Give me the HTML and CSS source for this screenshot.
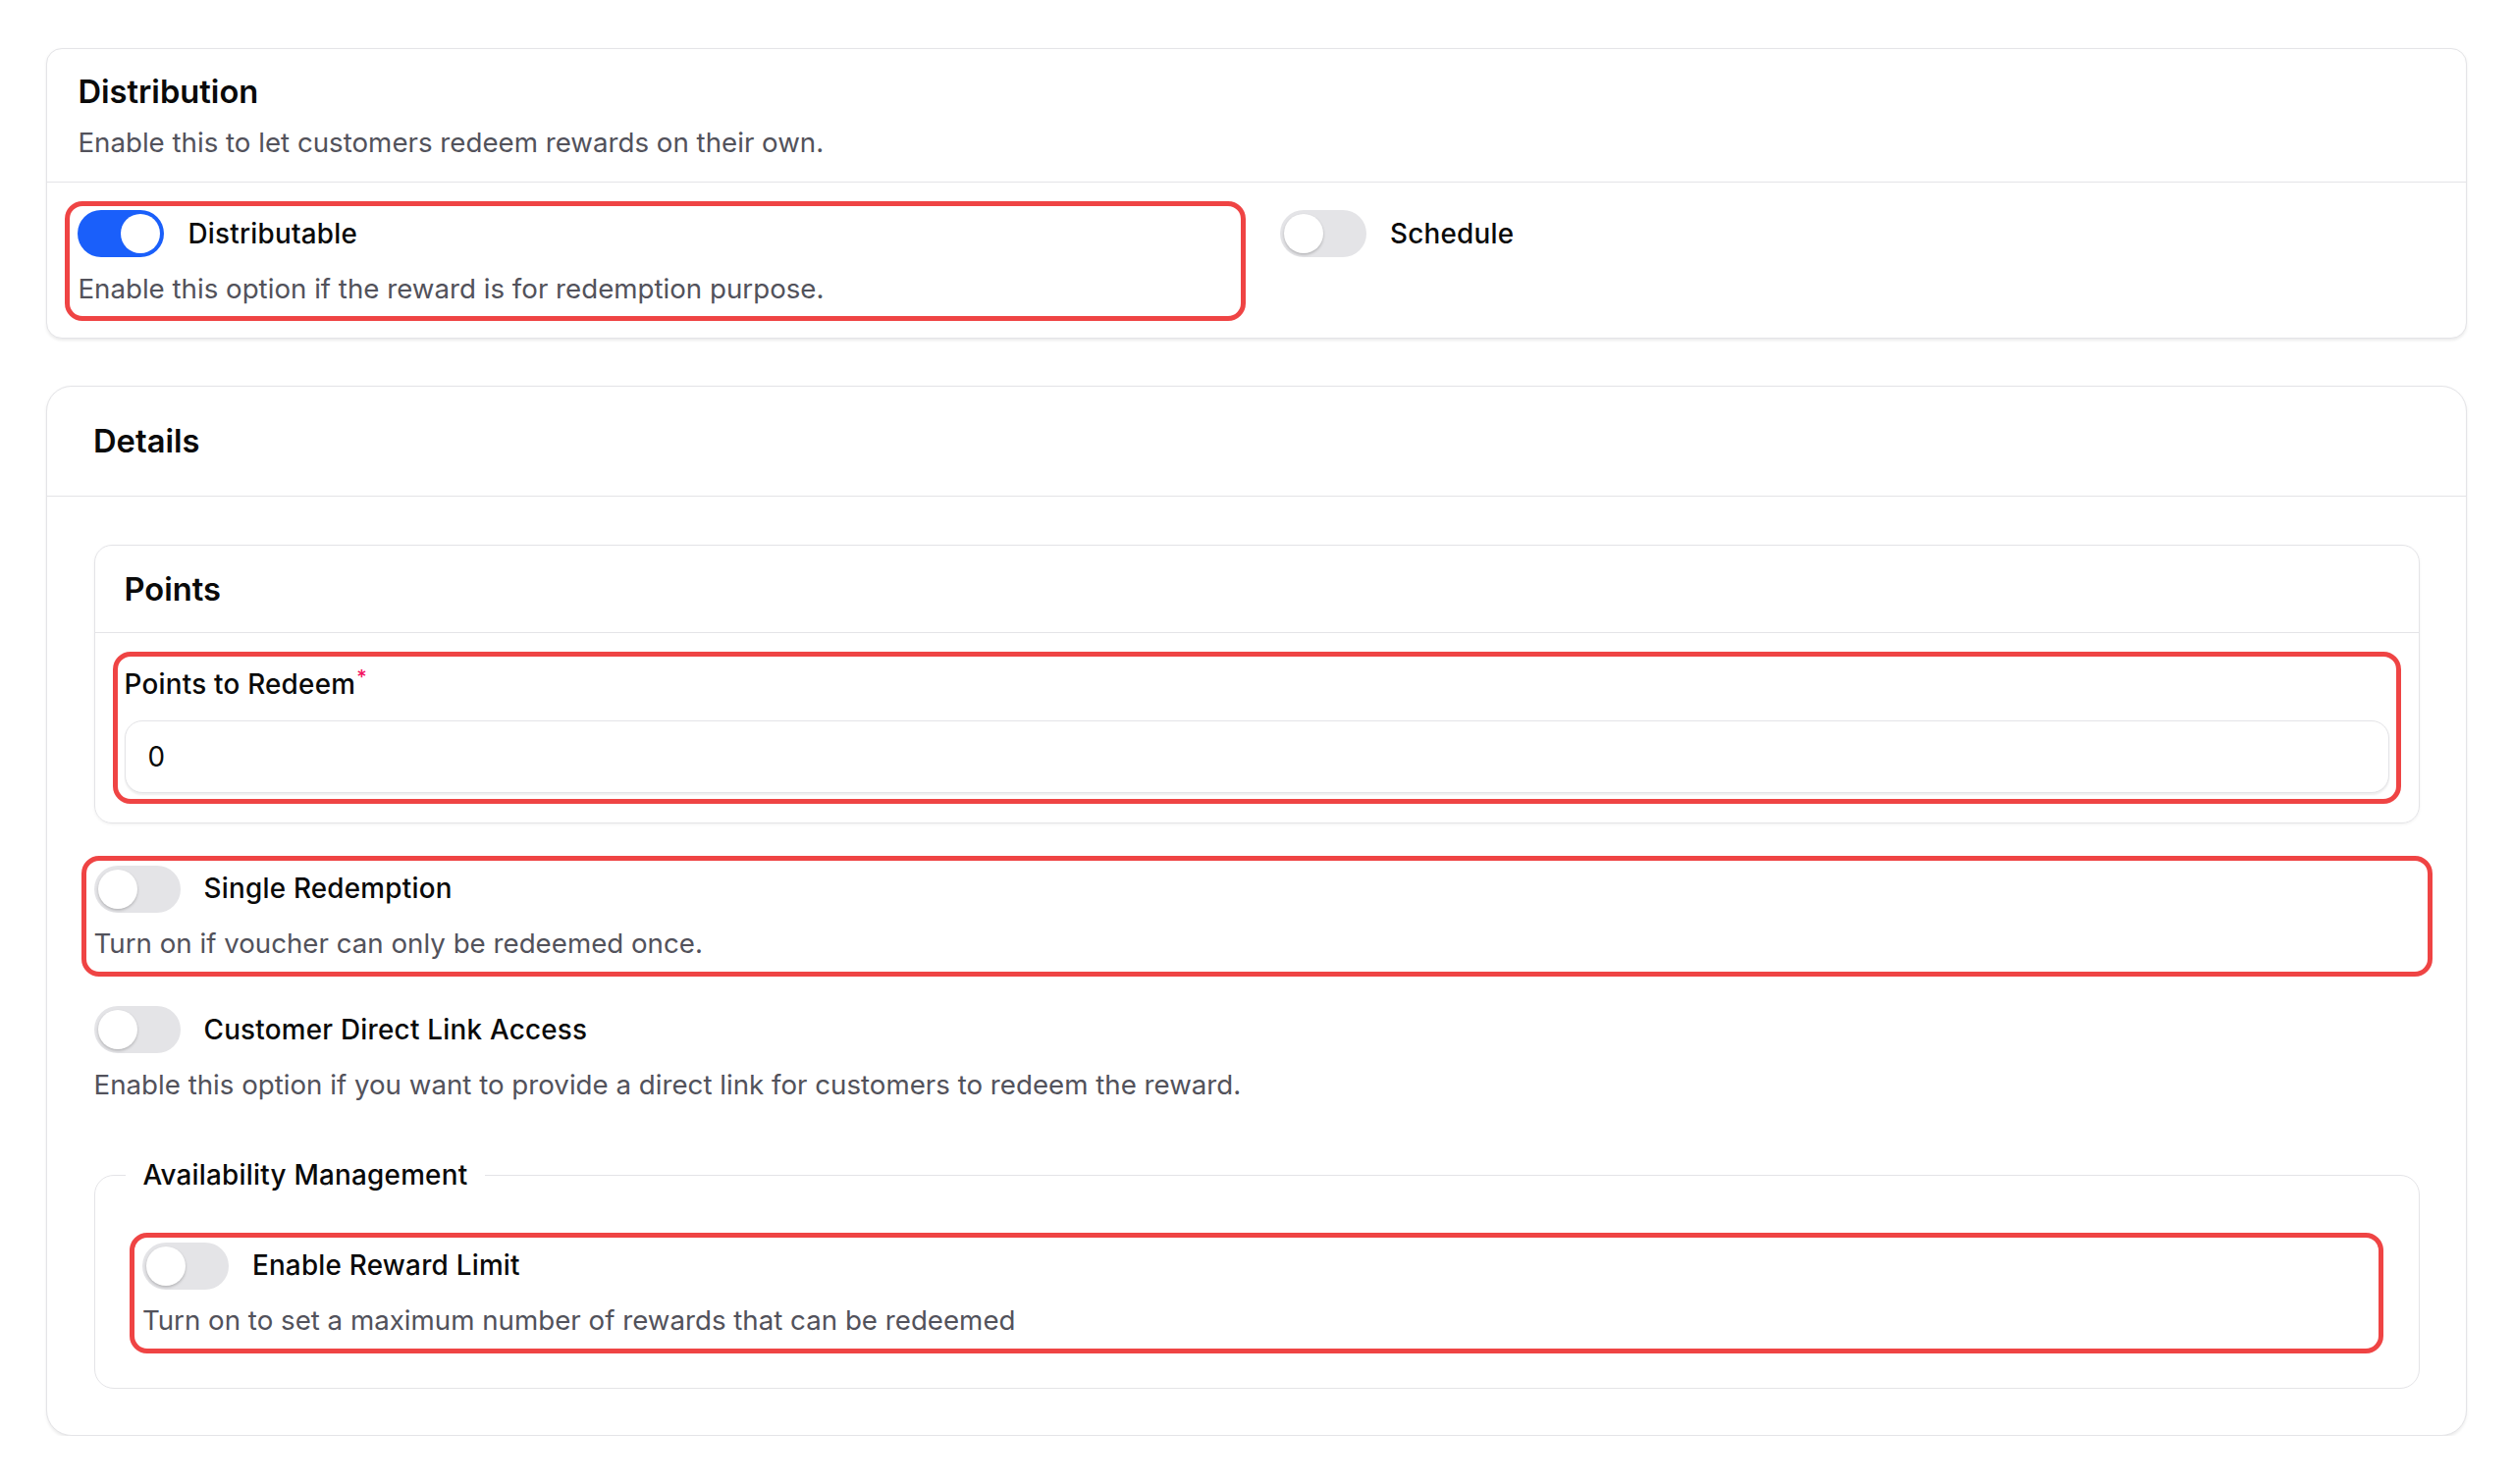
FILE: index.html
```html
<!DOCTYPE html>
<html lang="en">
<head>
<meta charset="utf-8">
<title>Reward settings</title>
<link rel="stylesheet" href="styles.css">
</head>
<body>
<div class="page">
  <section class="card">
    <header class="dist-head">
      <h2 class="title">Distribution</h2>
      <p class="subtitle">Enable this to let customers redeem rewards on their own.</p>
    </header>
    <div class="dist-body">
      <div class="option hl">
        <div class="toggle-row">
          <span class="switch on"><span class="knob"></span></span>
          <span class="opt-label">Distributable</span>
        </div>
        <p class="desc">Enable this option if the reward is for redemption purpose.</p>
      </div>
      <div class="option">
        <div class="toggle-row">
          <span class="switch"><span class="knob"></span></span>
          <span class="opt-label">Schedule</span>
        </div>
      </div>
    </div>
  </section>

  <section class="card details">
    <header class="details-head">
      <h2 class="title">Details</h2>
    </header>
    <div class="details-body">
      <div class="subcard">
        <div class="subcard-head">
          <h3 class="title">Points</h3>
        </div>
        <div class="subcard-body">
          <div class="field hl hl-field">
            <label class="field-label" for="points">Points to Redeem<span class="req">*</span></label>
            <input class="input" id="points" type="text" value="0">
          </div>
        </div>
      </div>

      <div class="option hl">
        <div class="toggle-row">
          <span class="switch"><span class="knob"></span></span>
          <span class="opt-label">Single Redemption</span>
        </div>
        <p class="desc">Turn on if voucher can only be redeemed once.</p>
      </div>

      <div class="option">
        <div class="toggle-row">
          <span class="switch"><span class="knob"></span></span>
          <span class="opt-label">Customer Direct Link Access</span>
        </div>
        <p class="desc">Enable this option if you want to provide a direct link for customers to redeem the reward.</p>
      </div>

      <fieldset class="group">
        <legend class="group-legend">Availability Management</legend>
        <div class="option hl">
          <div class="toggle-row">
            <span class="switch"><span class="knob"></span></span>
            <span class="opt-label">Enable Reward Limit</span>
          </div>
          <p class="desc">Turn on to set a maximum number of rewards that can be redeemed</p>
        </div>
      </fieldset>
    </div>
  </section>
</div>
</body>
</html>
```

FILE: styles.css
```css
html, body {
  margin: 0;
  padding: 0;
  background: #ffffff;
}

body {
  font-family: Inter, "Noto Sans", "Liberation Sans", sans-serif;
  color: #0a0a0a;
}

.page {
  padding: 48.5px 47px 0 47px;
  display: flex;
  flex-direction: column;
  gap: 47.5px;
}

.card {
  background: #ffffff;
  border: 1.6px solid #e4e4e7;
  border-radius: 16px;
  box-shadow: 0 1.5px 3px rgba(0, 0, 0, 0.08);
}

.details {
  border-radius: 26px;
}

.title {
  margin: 0;
  font-size: 32.7px;
  line-height: 46px;
  font-weight: 600;
  color: #0a0a0a;
}

.subtitle {
  margin: 8.4px 0 0;
  font-size: 27.7px;
  line-height: 41px;
  color: #52525b;
}

.dist-head {
  padding: 20.8px 31.4px 19.4px;
  border-bottom: 1.6px solid #e4e4e7;
}

.dist-body {
  display: grid;
  grid-template-columns: 1fr 1fr;
  column-gap: 48px;
  align-items: start;
  padding: 28.2px 31.4px 29.6px;
}

.toggle-row {
  display: flex;
  align-items: center;
  gap: 24px;
  height: 48px;
}

.switch {
  flex: none;
  box-sizing: border-box;
  width: 88px;
  height: 48px;
  padding: 0 4px;
  border-radius: 24px;
  background: #e4e4e7;
  display: flex;
  align-items: center;
}

.switch.on {
  background: #1a5ffa;
  justify-content: flex-end;
}

.knob {
  width: 40px;
  height: 40px;
  border-radius: 50%;
  background: #ffffff;
  box-shadow: 0 1.5px 3px rgba(0, 0, 0, 0.22);
}

.switch.on .knob {
  box-shadow: none;
}

.opt-label {
  font-size: 27.8px;
  line-height: 41px;
  font-weight: 500;
  letter-spacing: 0.25px;
  color: #0a0a0a;
}

.desc {
  margin: 11.6px 0 0;
  font-size: 27.7px;
  line-height: 41px;
  color: #52525b;
}

.details-head {
  padding: 32.5px 47px 33px;
  border-bottom: 1.6px solid #e4e4e7;
}

.details-body {
  padding: 48.5px 47.5px 47.5px;
  display: flex;
  flex-direction: column;
  gap: 43px;
}

.subcard {
  border: 1.6px solid #e4e4e7;
  border-radius: 18px;
  box-shadow: 0 1px 3px rgba(0, 0, 0, 0.06);
}

.subcard-head {
  padding: 20.8px 30px 21px;
  border-bottom: 1.6px solid #e4e4e7;
}

.subcard-body {
  padding: 32px 30px 30px;
}

.field-label {
  display: block;
  font-size: 27.8px;
  line-height: 41px;
  font-weight: 500;
  letter-spacing: 0.25px;
  color: #0a0a0a;
}

.req {
  position: relative;
  top: -10px;
  margin-left: 1px;
  font-size: 20px;
  color: #f31260;
}

.input {
  display: block;
  box-sizing: border-box;
  width: 100%;
  height: 74px;
  margin: 13px 0 0;
  padding: 0 23px;
  border: 1.6px solid #e4e4e7;
  border-radius: 18px;
  background: #ffffff;
  box-shadow: 0 1.5px 2px rgba(0, 0, 0, 0.07);
  font-family: Inter, "Noto Sans", sans-serif;
  font-size: 27.8px;
  font-weight: 400;
  color: #0a0a0a;
  outline: none;
}

.group {
  margin: 8.3px 0 0;
  padding: 47.5px 48.4px 47.2px;
  border: 1.6px solid #e4e4e7;
  border-radius: 20px;
  min-width: 0;
}

.group-legend {
  margin-left: -17px;
  padding: 0 17.5px;
  font-size: 27.8px;
  line-height: 41px;
  font-weight: 500;
  letter-spacing: 0.25px;
  color: #0a0a0a;
}

/* red annotation frames drawn over the highlighted controls */
.hl {
  position: relative;
}

.hl::after {
  content: "";
  position: absolute;
  top: -9.5px;
  right: -13px;
  bottom: -12.2px;
  left: -13px;
  border: 5px solid #ef4444;
  border-radius: 18px;
  pointer-events: none;
}

.hl-field::after {
  top: -12.8px;
  right: -12px;
  bottom: -11.6px;
  left: -12px;
}
```
